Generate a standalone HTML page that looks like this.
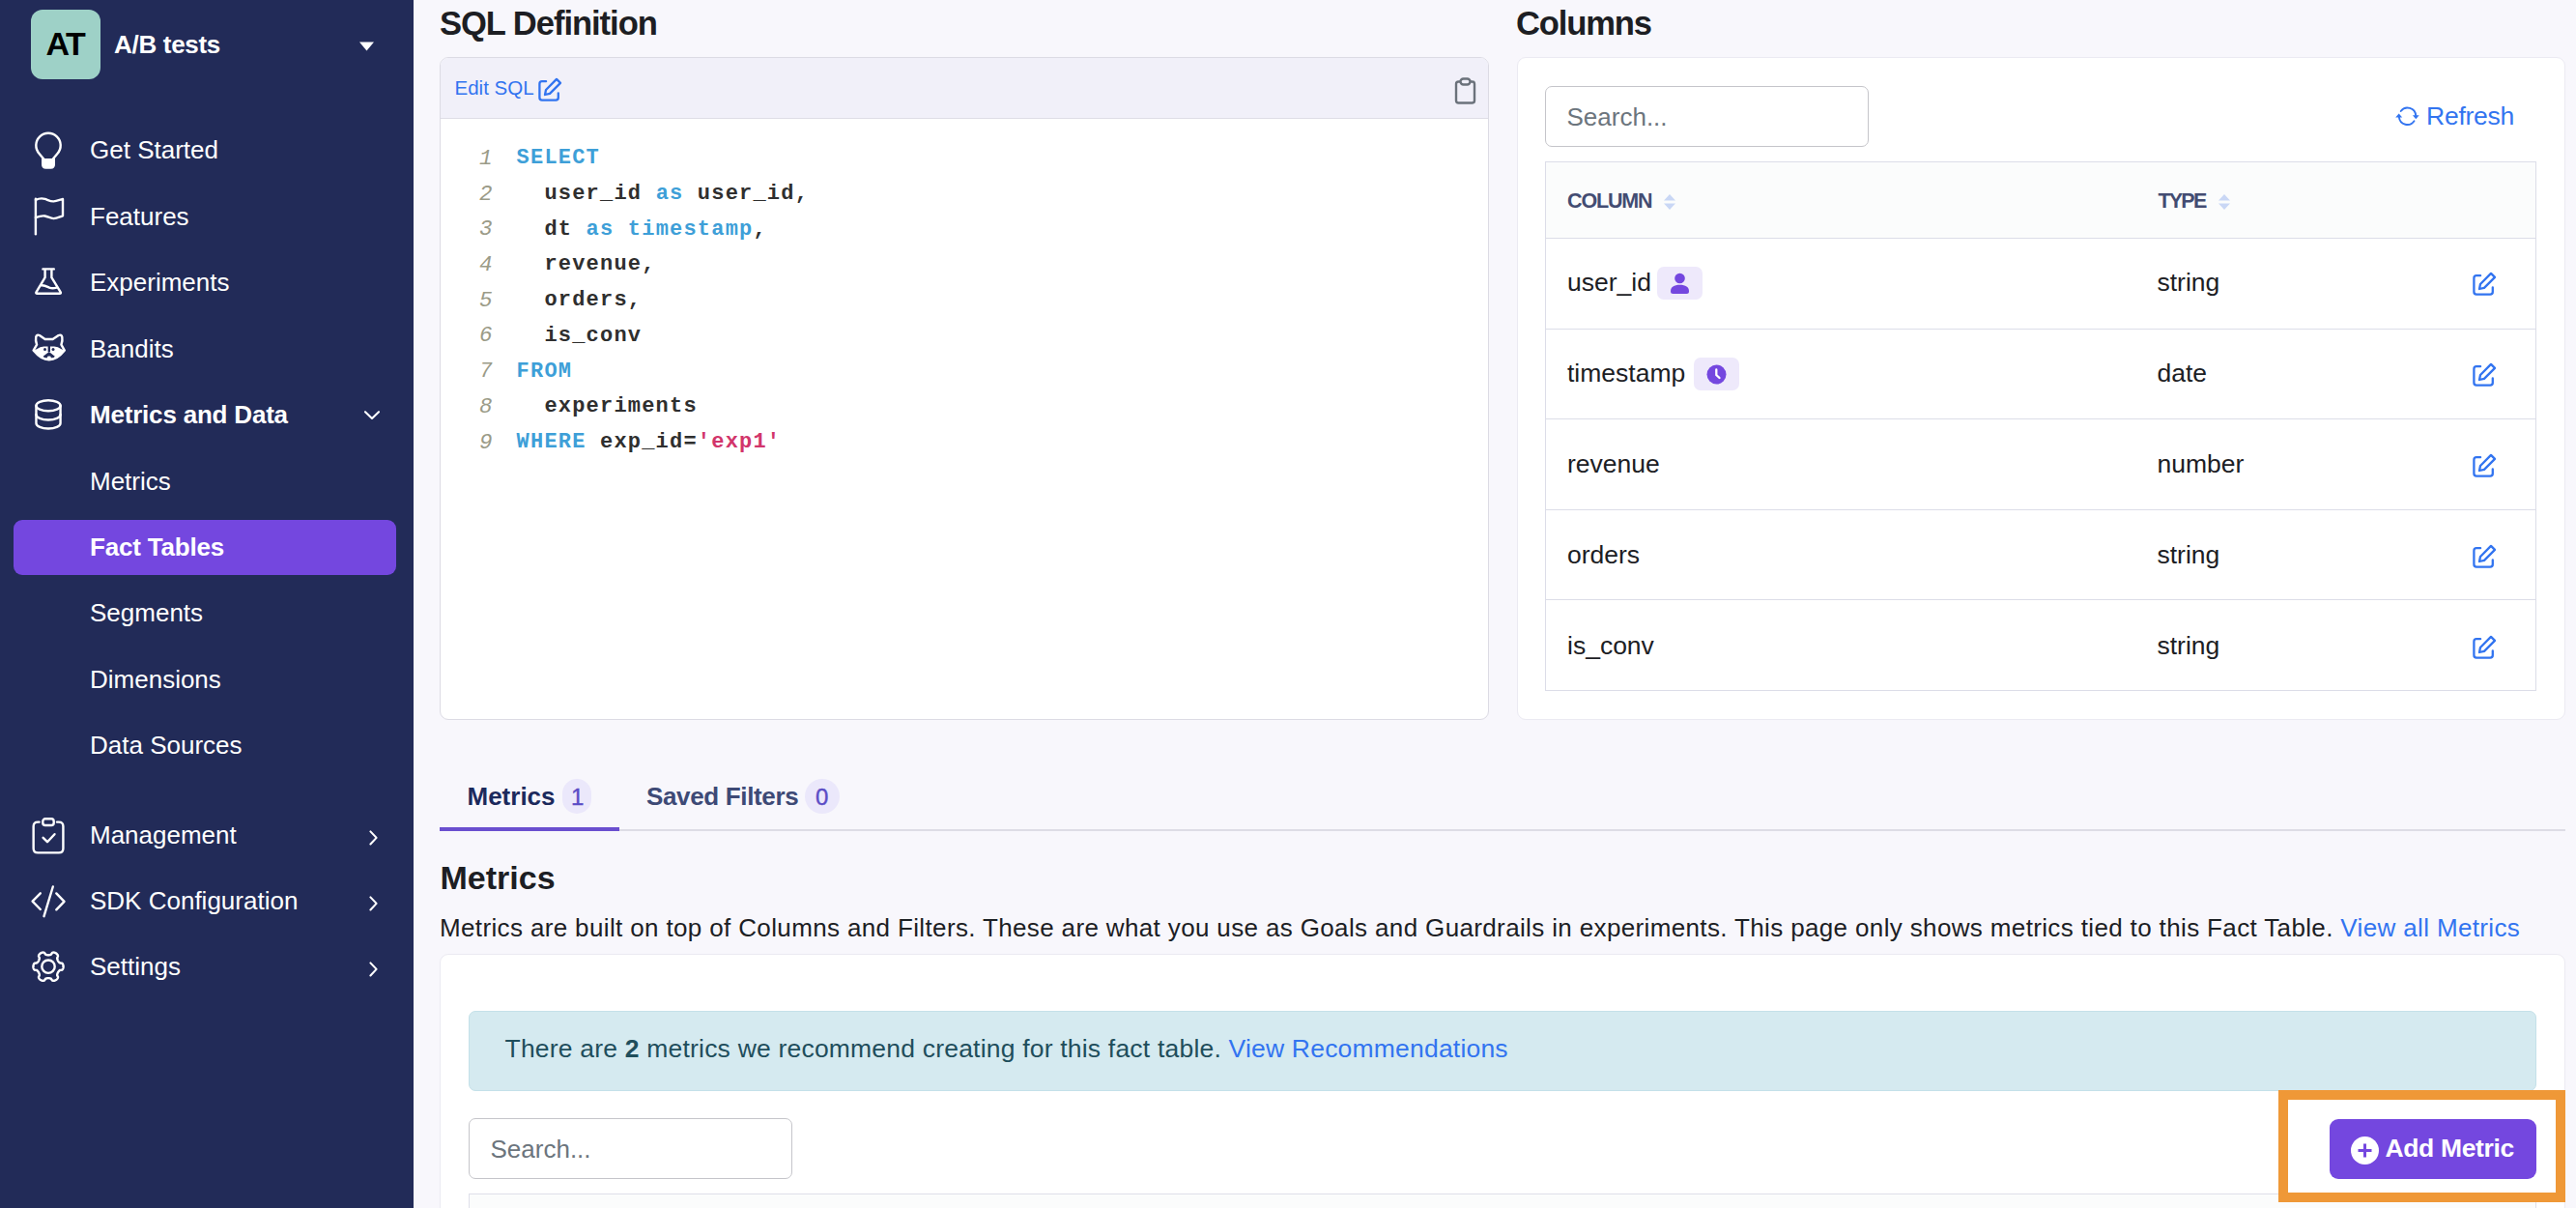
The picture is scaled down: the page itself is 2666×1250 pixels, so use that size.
<!DOCTYPE html>
<html><head><meta charset="utf-8"><title>Fact Table</title>
<style>
html,body{margin:0;padding:0;width:2666px;height:1250px;overflow:hidden;background:#f8f7fc}
body{position:relative;font-family:'Liberation Sans', sans-serif}
.t{position:absolute;white-space:nowrap}
.r{position:absolute;display:block}
</style></head><body>
<div class="r" style="left:0px;top:0px;width:2666px;height:1250px;background:#f8f7fc"></div>
<div class="r" style="left:0px;top:0px;width:428px;height:1250px;background:#222b58"></div>
<div class="r" style="left:428px;top:0px;width:1px;height:1250px;background:#ffffff"></div>
<div class="r" style="left:32px;top:10px;width:72px;height:72px;background:#9ed1c7;border-radius:12px"></div>
<div class="t" style="left:47.50px;top:28.21px;font-size:34px;line-height:34px;font-weight:700;color:#000;font-family:'Liberation Sans', sans-serif;letter-spacing:-1.6px">AT</div>
<div class="t" style="left:118.00px;top:32.99px;font-size:26px;line-height:26px;font-weight:700;color:#fff;font-family:'Liberation Sans', sans-serif;letter-spacing:-0.3px">A/B tests</div>
<svg class="r" style="left:371px;top:43px;" width="17" height="10" viewBox="0 0 17 10"><path d="M1 0.5 H16 L8.5 9.5 Z" fill="#fff"/></svg>
<div class="r" style="left:14px;top:538px;width:396px;height:57px;background:#7447df;border-radius:9px"></div>
<div class="t" style="left:93.00px;top:142.19px;font-size:26px;line-height:26px;font-weight:400;color:#ffffff;font-family:'Liberation Sans', sans-serif;">Get Started</div>
<div class="t" style="left:93.00px;top:210.69px;font-size:26px;line-height:26px;font-weight:400;color:#ffffff;font-family:'Liberation Sans', sans-serif;">Features</div>
<div class="t" style="left:93.00px;top:279.19px;font-size:26px;line-height:26px;font-weight:400;color:#ffffff;font-family:'Liberation Sans', sans-serif;">Experiments</div>
<div class="t" style="left:93.00px;top:347.69px;font-size:26px;line-height:26px;font-weight:400;color:#ffffff;font-family:'Liberation Sans', sans-serif;">Bandits</div>
<div class="t" style="left:93.00px;top:416.39px;font-size:26px;line-height:26px;font-weight:700;color:#ffffff;font-family:'Liberation Sans', sans-serif;letter-spacing:-0.2px">Metrics and Data</div>
<div class="t" style="left:93.00px;top:484.59px;font-size:26px;line-height:26px;font-weight:400;color:#ffffff;font-family:'Liberation Sans', sans-serif;">Metrics</div>
<div class="t" style="left:93.00px;top:553.09px;font-size:26px;line-height:26px;font-weight:700;color:#ffffff;font-family:'Liberation Sans', sans-serif;letter-spacing:-0.2px">Fact Tables</div>
<div class="t" style="left:93.00px;top:621.49px;font-size:26px;line-height:26px;font-weight:400;color:#ffffff;font-family:'Liberation Sans', sans-serif;">Segments</div>
<div class="t" style="left:93.00px;top:689.99px;font-size:26px;line-height:26px;font-weight:400;color:#ffffff;font-family:'Liberation Sans', sans-serif;">Dimensions</div>
<div class="t" style="left:93.00px;top:758.49px;font-size:26px;line-height:26px;font-weight:400;color:#ffffff;font-family:'Liberation Sans', sans-serif;">Data Sources</div>
<div class="t" style="left:93.00px;top:850.99px;font-size:26px;line-height:26px;font-weight:400;color:#ffffff;font-family:'Liberation Sans', sans-serif;">Management</div>
<div class="t" style="left:93.00px;top:919.49px;font-size:26px;line-height:26px;font-weight:400;color:#ffffff;font-family:'Liberation Sans', sans-serif;">SDK Configuration</div>
<div class="t" style="left:93.00px;top:987.49px;font-size:26px;line-height:26px;font-weight:400;color:#ffffff;font-family:'Liberation Sans', sans-serif;">Settings</div>
<svg class="r" style="left:28px;top:130px;" width="48" height="50" viewBox="0 0 48 50"><path d="M17.6 35 L12.6 29 A12.7 12.7 0 1 1 31.4 29 L26.4 35" fill="none" stroke="#fff" stroke-width="2.4" stroke-linecap="round" stroke-linejoin="round"/><path d="M15 34 H29 V40 Q29 44.7 24.5 44.7 H19.5 Q15 44.7 15 40 Z" fill="#fff"/></svg>
<svg class="r" style="left:28px;top:198px;" width="48" height="50" viewBox="0 0 48 50"><path d="M8.9 44.3 V7.8" fill="none" stroke="#fff" stroke-width="2.4" stroke-linecap="round" stroke-linejoin="round"/><path d="M8.9 8.8 C12 7.4 15.5 6.9 18.5 7.9 C21.5 8.9 24.5 10.6 27.5 10.4 C31 10.1 34 8.6 37 7.9 V25.3 C34 26.2 31 28 27.5 28.1 C24.5 28.2 21.5 26.1 18.5 25.5 C15.5 25 12 26 8.9 27.2" fill="none" stroke="#fff" stroke-width="2.4" stroke-linecap="round" stroke-linejoin="round"/></svg>
<svg class="r" style="left:28px;top:268px;" width="48" height="48" viewBox="0 0 48 48"><path d="M16.4 10.4 H27.8 M18.6 10.6 V19.2 L9.6 34.2 Q8.6 35.8 10.6 35.8 H33.6 Q35.6 35.8 34.6 34.2 L25.4 19.2 V10.6" fill="none" stroke="#fff" stroke-width="2.4" stroke-linecap="round" stroke-linejoin="round"/><path d="M14.8 27.3 C18 27 20 28.2 23 29.6 C26 30.8 28 30.4 30.6 29.6" fill="none" stroke="#fff" stroke-width="2.4" stroke-linecap="round" stroke-linejoin="round"/></svg>
<svg class="r" style="left:28px;top:336px;" width="48" height="48" viewBox="0 0 48 48"><path d="M18.6 15 H26.6 L32.6 11 Q35.6 9.8 36.3 12.8 Q37 16.5 35.4 20.6 L38.8 26.6 Q31 36.4 22.8 36.4 Q14.6 36.4 6.6 26.6 L10.1 20.6 Q8.5 16.5 9.2 12.8 Q9.9 9.8 12.9 11 Z" fill="none" stroke="#fff" stroke-width="2.4" stroke-linecap="round" stroke-linejoin="round"/><path d="M6.6 26.6 L10 25.2 Q13.5 22.6 17.5 22.4 H21.6 V28 H24 V22.4 H28.1 Q32 22.6 35.5 25.2 L38.8 26.6 Q31 36.4 22.8 36.4 Q14.6 36.4 6.6 26.6 Z" fill="#fff"/><circle cx="18.5" cy="25.4" r="1.5" fill="#222b58"/><circle cx="27" cy="25.4" r="1.5" fill="#222b58"/><path d="M16.6 32.8 L22.8 28 L28.8 32.8 Q27.8 34.4 25.6 34.3 H20 Q17.8 34.4 16.6 32.8 Z" fill="#222b58"/><rect x="20.9" y="32.4" width="3.8" height="3.4" rx="1.4" fill="#fff"/></svg>
<svg class="r" style="left:28px;top:404px;" width="48" height="48" viewBox="0 0 48 48"><ellipse cx="22" cy="15.8" rx="12.55" ry="5.5" fill="none" stroke="#fff" stroke-width="2.4" stroke-linecap="round" stroke-linejoin="round"/><path d="M9.45 15.8 V34 A12.55 5.5 0 0 0 34.55 34 V15.8" fill="none" stroke="#fff" stroke-width="2.4" stroke-linecap="round" stroke-linejoin="round"/><path d="M9.45 25 A12.55 5.5 0 0 0 34.55 25" fill="none" stroke="#fff" stroke-width="2.4" stroke-linecap="round" stroke-linejoin="round"/></svg>
<svg class="r" style="left:376px;top:423px;" width="18" height="13" viewBox="0 0 18 13"><path d="M2 3.2 L9 10 L16 3.2" fill="none" stroke="#fff" stroke-width="2.1" stroke-linecap="round" stroke-linejoin="round"/></svg>
<svg class="r" style="left:26px;top:840px;" width="48" height="48" viewBox="0 0 48 48"><path d="M14.6 10.6 H13.2 Q8.65 10.6 8.65 15.1 V37.9 Q8.65 42.4 13.2 42.4 H34.9 Q39.4 42.4 39.4 37.9 V15.1 Q39.4 10.6 34.9 10.6 H33" fill="none" stroke="#fff" stroke-width="2.4" stroke-linecap="round" stroke-linejoin="round"/><rect x="18.3" y="7.3" width="11.4" height="6.7" rx="2.6" fill="none" stroke="#fff" stroke-width="2.4" stroke-linecap="round" stroke-linejoin="round"/><path d="M18.6 26.8 L23 31.2 L30.5 23.2" fill="none" stroke="#fff" stroke-width="2.4" stroke-linecap="round" stroke-linejoin="round"/></svg>
<svg class="r" style="left:26px;top:908px;" width="48" height="48" viewBox="0 0 48 48"><path d="M15.8 16.3 L7.6 24.6 L15.8 33 M32.3 16.4 L40.5 24.9 L32.3 33.3 M28.8 9.5 L19.5 40.2" fill="none" stroke="#fff" stroke-width="2.4" stroke-linecap="round" stroke-linejoin="round"/></svg>
<svg class="r" style="left:26px;top:976px;" width="48" height="48" viewBox="0 0 48 48"><path d="M39.60 24.20 L39.58 23.78 L39.54 23.36 L39.46 22.95 L39.35 22.54 L39.21 22.14 L39.03 21.75 L38.81 21.37 L38.53 21.02 L38.15 20.70 L37.14 20.57 L36.13 20.50 L35.75 20.27 L35.45 20.03 L35.19 19.78 L34.96 19.53 L34.75 19.27 L34.55 19.02 L34.37 18.76 L34.20 18.49 L34.05 18.23 L33.90 17.95 L33.76 17.67 L33.63 17.38 L33.52 17.08 L33.41 16.76 L33.31 16.43 L33.23 16.08 L33.18 15.69 L33.17 15.23 L33.62 14.29 L34.02 13.33 L33.94 12.83 L33.78 12.41 L33.58 12.02 L33.34 11.66 L33.07 11.34 L32.78 11.03 L32.47 10.76 L32.15 10.51 L31.80 10.28 L31.44 10.09 L31.06 9.92 L30.68 9.78 L30.28 9.67 L29.87 9.60 L29.45 9.57 L29.03 9.58 L28.59 9.65 L28.13 9.83 L27.52 10.67 L26.95 11.53 L26.57 11.76 L26.21 11.90 L25.87 12.01 L25.55 12.09 L25.23 12.15 L24.92 12.20 L24.61 12.23 L24.30 12.25 L24.00 12.25 L23.70 12.25 L23.39 12.23 L23.08 12.20 L22.77 12.15 L22.45 12.09 L22.13 12.01 L21.79 11.90 L21.43 11.76 L21.05 11.53 L20.48 10.67 L19.87 9.83 L19.41 9.65 L18.97 9.58 L18.55 9.57 L18.13 9.60 L17.72 9.67 L17.32 9.78 L16.94 9.92 L16.56 10.09 L16.20 10.28 L15.85 10.51 L15.53 10.76 L15.22 11.03 L14.93 11.34 L14.66 11.66 L14.42 12.02 L14.22 12.41 L14.06 12.83 L13.98 13.33 L14.38 14.29 L14.83 15.23 L14.82 15.69 L14.77 16.08 L14.69 16.43 L14.59 16.76 L14.48 17.08 L14.37 17.38 L14.24 17.67 L14.10 17.95 L13.95 18.23 L13.80 18.49 L13.63 18.76 L13.45 19.02 L13.25 19.27 L13.04 19.53 L12.81 19.78 L12.55 20.03 L12.25 20.27 L11.87 20.50 L10.86 20.57 L9.85 20.70 L9.47 21.02 L9.19 21.37 L8.97 21.75 L8.79 22.14 L8.65 22.54 L8.54 22.95 L8.46 23.36 L8.42 23.78 L8.40 24.20 L8.42 24.62 L8.46 25.04 L8.54 25.45 L8.65 25.86 L8.79 26.26 L8.97 26.65 L9.19 27.03 L9.47 27.38 L9.85 27.70 L10.86 27.83 L11.87 27.90 L12.25 28.13 L12.55 28.37 L12.81 28.62 L13.04 28.87 L13.25 29.13 L13.45 29.38 L13.63 29.64 L13.80 29.91 L13.95 30.17 L14.10 30.45 L14.24 30.73 L14.37 31.02 L14.48 31.32 L14.59 31.64 L14.69 31.97 L14.77 32.32 L14.82 32.71 L14.83 33.17 L14.38 34.11 L13.98 35.07 L14.06 35.57 L14.22 35.99 L14.42 36.38 L14.66 36.74 L14.93 37.06 L15.22 37.37 L15.53 37.64 L15.85 37.89 L16.20 38.12 L16.56 38.31 L16.94 38.48 L17.32 38.62 L17.72 38.73 L18.13 38.80 L18.55 38.83 L18.97 38.82 L19.41 38.75 L19.87 38.57 L20.48 37.73 L21.05 36.87 L21.43 36.64 L21.79 36.50 L22.13 36.39 L22.45 36.31 L22.77 36.25 L23.08 36.20 L23.39 36.17 L23.70 36.15 L24.00 36.15 L24.30 36.15 L24.61 36.17 L24.92 36.20 L25.23 36.25 L25.55 36.31 L25.87 36.39 L26.21 36.50 L26.57 36.64 L26.95 36.87 L27.52 37.73 L28.13 38.57 L28.59 38.75 L29.03 38.82 L29.45 38.83 L29.87 38.80 L30.28 38.73 L30.68 38.62 L31.06 38.48 L31.44 38.31 L31.80 38.12 L32.15 37.89 L32.47 37.64 L32.78 37.37 L33.07 37.06 L33.34 36.74 L33.58 36.38 L33.78 35.99 L33.94 35.57 L34.02 35.07 L33.62 34.11 L33.17 33.17 L33.18 32.71 L33.23 32.32 L33.31 31.97 L33.41 31.64 L33.52 31.32 L33.63 31.02 L33.76 30.73 L33.90 30.45 L34.05 30.17 L34.20 29.91 L34.37 29.64 L34.55 29.38 L34.75 29.13 L34.96 28.87 L35.19 28.62 L35.45 28.37 L35.75 28.13 L36.13 27.90 L37.14 27.83 L38.15 27.70 L38.53 27.38 L38.81 27.03 L39.03 26.65 L39.21 26.26 L39.35 25.86 L39.46 25.45 L39.54 25.04 L39.58 24.62 Z" fill="none" stroke="#fff" stroke-width="2.4" stroke-linecap="round" stroke-linejoin="round"/><circle cx="24" cy="24.2" r="6.7" fill="none" stroke="#fff" stroke-width="2.4" stroke-linecap="round" stroke-linejoin="round"/></svg>
<svg class="r" style="left:379px;top:857.5px;" width="14" height="18" viewBox="0 0 14 18"><path d="M4.4 2.4 L10.6 8.9 L4.4 15.5" fill="none" stroke="#fff" stroke-width="2.1" stroke-linecap="round" stroke-linejoin="round"/></svg>
<svg class="r" style="left:379px;top:926px;" width="14" height="18" viewBox="0 0 14 18"><path d="M4.4 2.4 L10.6 8.9 L4.4 15.5" fill="none" stroke="#fff" stroke-width="2.1" stroke-linecap="round" stroke-linejoin="round"/></svg>
<svg class="r" style="left:379px;top:994px;" width="14" height="18" viewBox="0 0 14 18"><path d="M4.4 2.4 L10.6 8.9 L4.4 15.5" fill="none" stroke="#fff" stroke-width="2.1" stroke-linecap="round" stroke-linejoin="round"/></svg>
<div class="t" style="left:455.00px;top:7.00px;font-size:34.6px;line-height:34.6px;font-weight:700;color:#1d1e23;font-family:'Liberation Sans', sans-serif;letter-spacing:-1.05px">SQL Definition</div>
<div class="r" style="left:455px;top:59px;width:1086px;height:686px;background:#fff;border:1px solid #dcdbe4;border-radius:9px;box-sizing:border-box"></div>
<div class="r" style="left:456px;top:60px;width:1084px;height:63px;background:#f1f0f9;border-bottom:1.5px solid #dedde6;border-radius:8px 8px 0 0;box-sizing:border-box"></div>
<div class="t" style="left:470.50px;top:81.44px;font-size:20.5px;line-height:20.5px;font-weight:400;color:#3274f0;font-family:'Liberation Sans', sans-serif;">Edit SQL</div>
<svg class="r" style="left:556px;top:79px;" width="26.0" height="26.0" viewBox="0 0 26 26"><path d="M9.1 5.2 H5 Q2.4 5.2 2.4 7.8 V22 Q2.4 24.6 5 24.6 H19.2 Q21.8 24.6 21.8 22 V17.4" fill="none" stroke="#3274f0" stroke-width="2.3" stroke-linecap="round" stroke-linejoin="round"/><path d="M20 2.9 L24 6.9 L13 17.9 L8 19 L9 14 Z" fill="none" stroke="#3274f0" stroke-width="2.3" stroke-linecap="round" stroke-linejoin="round"/></svg>
<svg class="r" style="left:1504px;top:79px;" width="25" height="30" viewBox="0 0 25 30"><path d="M7 5.5 H5.5 Q3 5.5 3 8 V25 Q3 27.5 5.5 27.5 H19.5 Q22 27.5 22 25 V8 Q22 5.5 19.5 5.5 H18" fill="none" stroke="#6b727b" stroke-width="2.4"/><rect x="7.5" y="2.5" width="10" height="6" rx="3" fill="none" stroke="#6b727b" stroke-width="2.4"/></svg>
<div class="t" style="left:496.00px;top:152.96px;font-size:22.5px;line-height:22.5px;font-weight:400;color:#9b9b88;font-family:'Liberation Mono', monospace;font-style:italic">1</div>
<div class="t" style="left:534.60px;top:153.35px;font-size:22px;line-height:22px;font-weight:700;color:#2f2f2f;font-family:'Liberation Mono', monospace;white-space:pre;letter-spacing:1.2px"><span style="color:#3e9fd8">SELECT</span></div>
<div class="t" style="left:496.00px;top:189.66px;font-size:22.5px;line-height:22.5px;font-weight:400;color:#9b9b88;font-family:'Liberation Mono', monospace;font-style:italic">2</div>
<div class="t" style="left:534.60px;top:190.05px;font-size:22px;line-height:22px;font-weight:700;color:#2f2f2f;font-family:'Liberation Mono', monospace;white-space:pre;letter-spacing:1.2px"><span style="color:#2f2f2f">  user_id </span><span style="color:#3e9fd8">as</span><span style="color:#2f2f2f"> user_id,</span></div>
<div class="t" style="left:496.00px;top:226.36px;font-size:22.5px;line-height:22.5px;font-weight:400;color:#9b9b88;font-family:'Liberation Mono', monospace;font-style:italic">3</div>
<div class="t" style="left:534.60px;top:226.75px;font-size:22px;line-height:22px;font-weight:700;color:#2f2f2f;font-family:'Liberation Mono', monospace;white-space:pre;letter-spacing:1.2px"><span style="color:#2f2f2f">  dt </span><span style="color:#3e9fd8">as</span><span style="color:#2f2f2f"> </span><span style="color:#3e9fd8">timestamp</span><span style="color:#2f2f2f">,</span></div>
<div class="t" style="left:496.00px;top:263.06px;font-size:22.5px;line-height:22.5px;font-weight:400;color:#9b9b88;font-family:'Liberation Mono', monospace;font-style:italic">4</div>
<div class="t" style="left:534.60px;top:263.45px;font-size:22px;line-height:22px;font-weight:700;color:#2f2f2f;font-family:'Liberation Mono', monospace;white-space:pre;letter-spacing:1.2px"><span style="color:#2f2f2f">  revenue,</span></div>
<div class="t" style="left:496.00px;top:299.76px;font-size:22.5px;line-height:22.5px;font-weight:400;color:#9b9b88;font-family:'Liberation Mono', monospace;font-style:italic">5</div>
<div class="t" style="left:534.60px;top:300.15px;font-size:22px;line-height:22px;font-weight:700;color:#2f2f2f;font-family:'Liberation Mono', monospace;white-space:pre;letter-spacing:1.2px"><span style="color:#2f2f2f">  orders,</span></div>
<div class="t" style="left:496.00px;top:336.46px;font-size:22.5px;line-height:22.5px;font-weight:400;color:#9b9b88;font-family:'Liberation Mono', monospace;font-style:italic">6</div>
<div class="t" style="left:534.60px;top:336.85px;font-size:22px;line-height:22px;font-weight:700;color:#2f2f2f;font-family:'Liberation Mono', monospace;white-space:pre;letter-spacing:1.2px"><span style="color:#2f2f2f">  is_conv</span></div>
<div class="t" style="left:496.00px;top:373.16px;font-size:22.5px;line-height:22.5px;font-weight:400;color:#9b9b88;font-family:'Liberation Mono', monospace;font-style:italic">7</div>
<div class="t" style="left:534.60px;top:373.55px;font-size:22px;line-height:22px;font-weight:700;color:#2f2f2f;font-family:'Liberation Mono', monospace;white-space:pre;letter-spacing:1.2px"><span style="color:#3e9fd8">FROM</span></div>
<div class="t" style="left:496.00px;top:409.86px;font-size:22.5px;line-height:22.5px;font-weight:400;color:#9b9b88;font-family:'Liberation Mono', monospace;font-style:italic">8</div>
<div class="t" style="left:534.60px;top:410.25px;font-size:22px;line-height:22px;font-weight:700;color:#2f2f2f;font-family:'Liberation Mono', monospace;white-space:pre;letter-spacing:1.2px"><span style="color:#2f2f2f">  experiments</span></div>
<div class="t" style="left:496.00px;top:446.56px;font-size:22.5px;line-height:22.5px;font-weight:400;color:#9b9b88;font-family:'Liberation Mono', monospace;font-style:italic">9</div>
<div class="t" style="left:534.60px;top:446.95px;font-size:22px;line-height:22px;font-weight:700;color:#2f2f2f;font-family:'Liberation Mono', monospace;white-space:pre;letter-spacing:1.2px"><span style="color:#3e9fd8">WHERE</span><span style="color:#2f2f2f"> exp_id=</span><span style="color:#d2356b">&#x27;exp1&#x27;</span></div>
<div class="t" style="left:1569.00px;top:7.00px;font-size:34.6px;line-height:34.6px;font-weight:700;color:#1d1e23;font-family:'Liberation Sans', sans-serif;letter-spacing:-1.15px">Columns</div>
<div class="r" style="left:1570px;top:59px;width:1085px;height:686px;background:#fff;border:1px solid #ebeaf2;border-radius:9px;box-sizing:border-box"></div>
<div class="r" style="left:1599px;top:89px;width:335px;height:63px;background:#fff;border:1.5px solid #c5c5ca;border-radius:7px;box-sizing:border-box"></div>
<div class="t" style="left:1621.50px;top:108.19px;font-size:26px;line-height:26px;font-weight:400;color:#6c757d;font-family:'Liberation Sans', sans-serif;">Search...</div>
<svg class="r" style="left:2472px;top:100px;" width="40" height="40" viewBox="0 0 40 40"><path d="M12.7 15 A8.6 8.6 0 0 1 28.2 19.6" fill="none" stroke="#3274f0" stroke-width="1.9" stroke-linecap="round"/><path d="M24.9 19.3 H31.7 L28.3 23.3 Z" fill="#3274f0"/><path d="M26.5 25.3 A8.6 8.6 0 0 1 10.9 21.4" fill="none" stroke="#3274f0" stroke-width="1.9" stroke-linecap="round"/><path d="M7.2 21.6 H14.2 L10.7 17.4 Z" fill="#3274f0"/></svg>
<div class="t" style="left:2511.00px;top:107.06px;font-size:26.5px;line-height:26.5px;font-weight:400;color:#3274f0;font-family:'Liberation Sans', sans-serif;letter-spacing:-0.25px">Refresh</div>
<div class="r" style="left:1599px;top:167px;width:1026px;height:548px;background:#fff;border:1px solid #dcdde8;box-sizing:border-box"></div>
<div class="r" style="left:1600px;top:168px;width:1024px;height:78px;background:#fbfcfc"></div>
<div class="r" style="left:1600px;top:246px;width:1024px;height:1px;background:#dcdde8"></div>
<div class="r" style="left:1600px;top:340px;width:1024px;height:1px;background:#dcdde8"></div>
<div class="r" style="left:1600px;top:433px;width:1024px;height:1px;background:#dcdde8"></div>
<div class="r" style="left:1600px;top:527px;width:1024px;height:1px;background:#dcdde8"></div>
<div class="r" style="left:1600px;top:620px;width:1024px;height:1px;background:#dcdde8"></div>
<div class="t" style="left:1622.00px;top:198.40px;font-size:21.5px;line-height:21.5px;font-weight:700;color:#434c72;font-family:'Liberation Sans', sans-serif;letter-spacing:-1.15px">COLUMN</div>
<div class="t" style="left:2233.50px;top:198.40px;font-size:21.5px;line-height:21.5px;font-weight:700;color:#434c72;font-family:'Liberation Sans', sans-serif;letter-spacing:-1.8px">TYPE</div>
<svg class="r" style="left:1720.5px;top:199.5px;" width="14" height="18" viewBox="0 0 14 18"><path d="M7 1 L13 7.5 H1 Z M7 17 L13 10.5 H1 Z" fill="#c9d7f5"/></svg>
<svg class="r" style="left:2294.5px;top:199.5px;" width="14" height="18" viewBox="0 0 14 18"><path d="M7 1 L13 7.5 H1 Z M7 17 L13 10.5 H1 Z" fill="#c9d7f5"/></svg>
<div class="t" style="left:1622.00px;top:278.56px;font-size:26.5px;line-height:26.5px;font-weight:400;color:#1c2024;font-family:'Liberation Sans', sans-serif;">user_id</div>
<div class="t" style="left:2232.50px;top:278.56px;font-size:26.5px;line-height:26.5px;font-weight:400;color:#1c2024;font-family:'Liberation Sans', sans-serif;">string</div>
<svg class="r" style="left:2557.5px;top:279.5px;" width="26.0" height="26.0" viewBox="0 0 26 26"><path d="M9.1 5.2 H5 Q2.4 5.2 2.4 7.8 V22 Q2.4 24.6 5 24.6 H19.2 Q21.8 24.6 21.8 22 V17.4" fill="none" stroke="#3274f0" stroke-width="2.3" stroke-linecap="round" stroke-linejoin="round"/><path d="M20 2.9 L24 6.9 L13 17.9 L8 19 L9 14 Z" fill="none" stroke="#3274f0" stroke-width="2.3" stroke-linecap="round" stroke-linejoin="round"/></svg>
<div class="t" style="left:1622.00px;top:372.56px;font-size:26.5px;line-height:26.5px;font-weight:400;color:#1c2024;font-family:'Liberation Sans', sans-serif;">timestamp</div>
<div class="t" style="left:2232.50px;top:372.56px;font-size:26.5px;line-height:26.5px;font-weight:400;color:#1c2024;font-family:'Liberation Sans', sans-serif;">date</div>
<svg class="r" style="left:2557.5px;top:373.5px;" width="26.0" height="26.0" viewBox="0 0 26 26"><path d="M9.1 5.2 H5 Q2.4 5.2 2.4 7.8 V22 Q2.4 24.6 5 24.6 H19.2 Q21.8 24.6 21.8 22 V17.4" fill="none" stroke="#3274f0" stroke-width="2.3" stroke-linecap="round" stroke-linejoin="round"/><path d="M20 2.9 L24 6.9 L13 17.9 L8 19 L9 14 Z" fill="none" stroke="#3274f0" stroke-width="2.3" stroke-linecap="round" stroke-linejoin="round"/></svg>
<div class="t" style="left:1622.00px;top:466.56px;font-size:26.5px;line-height:26.5px;font-weight:400;color:#1c2024;font-family:'Liberation Sans', sans-serif;">revenue</div>
<div class="t" style="left:2232.50px;top:466.56px;font-size:26.5px;line-height:26.5px;font-weight:400;color:#1c2024;font-family:'Liberation Sans', sans-serif;">number</div>
<svg class="r" style="left:2557.5px;top:467.5px;" width="26.0" height="26.0" viewBox="0 0 26 26"><path d="M9.1 5.2 H5 Q2.4 5.2 2.4 7.8 V22 Q2.4 24.6 5 24.6 H19.2 Q21.8 24.6 21.8 22 V17.4" fill="none" stroke="#3274f0" stroke-width="2.3" stroke-linecap="round" stroke-linejoin="round"/><path d="M20 2.9 L24 6.9 L13 17.9 L8 19 L9 14 Z" fill="none" stroke="#3274f0" stroke-width="2.3" stroke-linecap="round" stroke-linejoin="round"/></svg>
<div class="t" style="left:1622.00px;top:560.56px;font-size:26.5px;line-height:26.5px;font-weight:400;color:#1c2024;font-family:'Liberation Sans', sans-serif;">orders</div>
<div class="t" style="left:2232.50px;top:560.56px;font-size:26.5px;line-height:26.5px;font-weight:400;color:#1c2024;font-family:'Liberation Sans', sans-serif;">string</div>
<svg class="r" style="left:2557.5px;top:561.5px;" width="26.0" height="26.0" viewBox="0 0 26 26"><path d="M9.1 5.2 H5 Q2.4 5.2 2.4 7.8 V22 Q2.4 24.6 5 24.6 H19.2 Q21.8 24.6 21.8 22 V17.4" fill="none" stroke="#3274f0" stroke-width="2.3" stroke-linecap="round" stroke-linejoin="round"/><path d="M20 2.9 L24 6.9 L13 17.9 L8 19 L9 14 Z" fill="none" stroke="#3274f0" stroke-width="2.3" stroke-linecap="round" stroke-linejoin="round"/></svg>
<div class="t" style="left:1622.00px;top:654.56px;font-size:26.5px;line-height:26.5px;font-weight:400;color:#1c2024;font-family:'Liberation Sans', sans-serif;">is_conv</div>
<div class="t" style="left:2232.50px;top:654.56px;font-size:26.5px;line-height:26.5px;font-weight:400;color:#1c2024;font-family:'Liberation Sans', sans-serif;">string</div>
<svg class="r" style="left:2557.5px;top:655.5px;" width="26.0" height="26.0" viewBox="0 0 26 26"><path d="M9.1 5.2 H5 Q2.4 5.2 2.4 7.8 V22 Q2.4 24.6 5 24.6 H19.2 Q21.8 24.6 21.8 22 V17.4" fill="none" stroke="#3274f0" stroke-width="2.3" stroke-linecap="round" stroke-linejoin="round"/><path d="M20 2.9 L24 6.9 L13 17.9 L8 19 L9 14 Z" fill="none" stroke="#3274f0" stroke-width="2.3" stroke-linecap="round" stroke-linejoin="round"/></svg>
<div class="r" style="left:1715px;top:276px;width:47px;height:34px;background:#eee9fb;border-radius:7px"></div>
<svg class="r" style="left:1727px;top:281px;" width="23" height="24" viewBox="0 0 23 24"><circle cx="11.5" cy="7" r="5.3" fill="#7447df"/><path d="M2 20.5 C2 16 5.5 13.8 11.5 13.8 C17.5 13.8 21 16 21 20.5 Q21 23 18.5 23 H4.5 Q2 23 2 20.5 Z" fill="#7447df"/></svg>
<div class="r" style="left:1753px;top:370px;width:47px;height:34px;background:#eee9fb;border-radius:7px"></div>
<svg class="r" style="left:1765px;top:376px;" width="23" height="23" viewBox="0 0 23 23"><circle cx="11.5" cy="11.5" r="10" fill="#7447df"/><path d="M11.3 6.5 V12 L14.5 15" fill="none" stroke="#fff" stroke-width="2.3" stroke-linecap="round"/></svg>
<div class="r" style="left:455px;top:857.5px;width:2200px;height:2.5px;background:#dddce5"></div>
<div class="r" style="left:455px;top:856px;width:186px;height:4px;background:#6a4fcf"></div>
<div class="t" style="left:483.50px;top:810.99px;font-size:26px;line-height:26px;font-weight:700;color:#1c2a5c;font-family:'Liberation Sans', sans-serif;">Metrics</div>
<div class="r" style="left:582px;top:806px;width:30px;height:36px;background:#ebe8fb;border-radius:15px"></div>
<div class="t" style="left:591.00px;top:812.68px;font-size:24px;line-height:24px;font-weight:400;color:#5b4dc6;font-family:'Liberation Sans', sans-serif;-webkit-text-stroke:0.4px #5b4dc6">1</div>
<div class="t" style="left:669.00px;top:810.99px;font-size:26px;line-height:26px;font-weight:700;color:#3e4a76;font-family:'Liberation Sans', sans-serif;letter-spacing:-0.35px">Saved Filters</div>
<div class="r" style="left:833px;top:806px;width:36px;height:36px;background:#ebe8fb;border-radius:18px"></div>
<div class="t" style="left:844.00px;top:812.68px;font-size:24px;line-height:24px;font-weight:400;color:#5b4dc6;font-family:'Liberation Sans', sans-serif;-webkit-text-stroke:0.4px #5b4dc6">0</div>
<div class="t" style="left:455.50px;top:890.61px;font-size:34px;line-height:34px;font-weight:700;color:#1d1e23;font-family:'Liberation Sans', sans-serif;">Metrics</div>
<div class="t" id="para" style="left:455.00px;top:946.69px;font-size:26px;line-height:26px;font-weight:400;color:#1c2024;font-family:'Liberation Sans', sans-serif;letter-spacing:0.36px">Metrics are built on top of Columns and Filters. These are what you use as Goals and Guardrails in experiments. This page only shows metrics tied to this Fact Table. <span style="color:#3274f0">View all Metrics</span></div>
<div class="r" style="left:455px;top:987px;width:2200px;height:275px;background:#fff;border:1px solid #ebeaf2;border-radius:9px 9px 0 0;box-sizing:border-box"></div>
<div class="r" style="left:485px;top:1046px;width:2140px;height:83px;background:#d5eaf0;border:1.5px solid #c4e1e9;border-radius:7px;box-sizing:border-box"></div>
<div class="t" id="alert" style="left:522.50px;top:1072.16px;font-size:26.5px;line-height:26.5px;font-weight:400;color:#1f4e5c;font-family:'Liberation Sans', sans-serif;letter-spacing:0.2px">There are <b>2</b> metrics we recommend creating for this fact table. <span style="color:#3274f0">View Recommendations</span></div>
<div class="r" style="left:485px;top:1157px;width:335px;height:63px;background:#fff;border:1.5px solid #c5c5ca;border-radius:7px;box-sizing:border-box"></div>
<div class="t" style="left:507.50px;top:1175.99px;font-size:26px;line-height:26px;font-weight:400;color:#6c757d;font-family:'Liberation Sans', sans-serif;">Search...</div>
<div class="r" style="left:485px;top:1234.5px;width:2140px;height:27.5px;background:#fbfcfc;border-top:1.5px solid #dedfe9;border-left:1.5px solid #dedfe9;border-right:1.5px solid #dedfe9;box-sizing:border-box"></div>
<div class="r" style="left:2358px;top:1128px;width:297px;height:116px;border:10px solid #ef9837;box-sizing:border-box;background:#fff"></div>
<div class="r" style="left:2411px;top:1158px;width:214px;height:62px;background:#7447df;border-radius:9px"></div>
<svg class="r" style="left:2432px;top:1175px;" width="31" height="31" viewBox="0 0 31 31"><circle cx="15.5" cy="15.5" r="14.5" fill="#fff"/><path d="M15.5 8.5 V22.5 M8.5 15.5 H22.5" stroke="#7447df" stroke-width="3"/></svg>
<div class="t" style="left:2468.50px;top:1174.56px;font-size:26.5px;line-height:26.5px;font-weight:700;color:#fff;font-family:'Liberation Sans', sans-serif;letter-spacing:-0.35px">Add Metric</div>
</body></html>
